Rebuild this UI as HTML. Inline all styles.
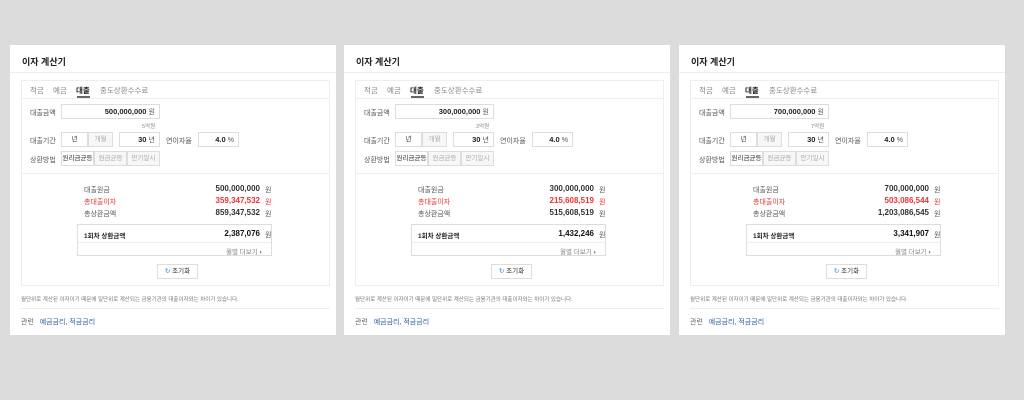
<!DOCTYPE html>
<html><head><meta charset="utf-8"><style>
*{margin:0;padding:0;box-sizing:border-box}
body{width:1024px;height:400px;background:#dcdcdc;font-family:"Liberation Sans","Noto Sans CJK KR",sans-serif;position:relative;overflow:hidden;font-size:7px;color:#555}
.p{position:absolute;top:45px;width:326px;height:290px;background:#fff}
.a{position:absolute;white-space:nowrap}
.t{left:12px;top:10px;font-size:9px;font-weight:bold;color:#222}
.hr{position:absolute;height:1px;background:#eee}
.in{position:absolute;left:11px;top:35px;width:309px;height:206px;border:1px solid #eee;background:#fff}
.tab{top:4px;font-size:7.5px;color:#888}
.box{position:absolute;border:1px solid #ddd;background:#fff;font-size:7.5px;color:#222;font-weight:bold;text-align:right;padding-right:4px;line-height:13px}
.lb{font-size:7px;color:#555}
.btn{position:absolute;border:1px solid #ddd;background:#fff;font-size:6.5px;color:#aaa;text-align:center;line-height:13px}
.v{font-size:8px;font-weight:bold;color:#333;text-align:right}
.w{font-size:7px;color:#555}
</style></head><body>
<div class="p" style="left:10px">
<div class="a t">이자 계산기</div><div class="hr" style="left:0;right:0;top:27px"></div>
<div class="in">
<div class="a tab" style="left:8px">적금</div><div class="a tab" style="left:31px">예금</div><div class="a tab" style="left:54px;color:#222;font-weight:bold">대출</div><div class="a tab" style="left:78px">중도상환수수료</div>
<div class="hr" style="left:55px;width:13px;top:15px;height:2px;background:#666"></div>
<div class="hr" style="left:0;right:0;top:17px"></div>
<div class="a lb" style="left:8px;top:27px">대출금액</div>
<div class="box" style="left:39px;top:23px;width:99px;height:15px">500,000,000 <span class="w" style="font-weight:normal">원</span></div>
<div class="a" style="left:120px;top:41px;font-size:5.5px;color:#888">5억원</div>
<div class="a lb" style="left:8px;top:55px">대출기간</div>
<div class="btn" style="left:39px;top:51px;width:27px;height:15px;color:#333">년</div>
<div class="btn" style="left:66px;top:51px;width:25px;height:15px;background:#f7f7f7">개월</div>
<div class="box" style="left:97px;top:51px;width:41px;height:15px">30 <span class="w" style="font-weight:normal">년</span></div>
<div class="a lb" style="left:144px;top:55px">연이자율</div>
<div class="box" style="left:176px;top:51px;width:41px;height:15px">4.0 <span class="w" style="font-weight:normal">%</span></div>
<div class="a lb" style="left:8px;top:74px">상환방법</div>
<div class="btn" style="left:39px;top:70px;width:33px;height:15px;color:#333">원리금균등</div>
<div class="btn" style="left:72px;top:70px;width:33px;height:15px;background:#f7f7f7">원금균등</div>
<div class="btn" style="left:105px;top:70px;width:33px;height:15px;background:#f7f7f7">만기일시</div>
<div class="hr" style="left:0;right:0;top:92px"></div>
<div class="a lb" style="left:62px;top:104px">대출원금</div><div class="a v" style="right:69px;top:103px">500,000,000</div><div class="a w" style="left:243px;top:104px">원</div>
<div class="a lb" style="left:62px;top:116px;color:#e33">총대출이자</div><div class="a v" style="right:69px;top:115px;color:#e33">359,347,532</div><div class="a w" style="left:243px;top:116px;color:#e33">원</div>
<div class="a lb" style="left:62px;top:128px">총상환금액</div><div class="a v" style="right:69px;top:127px">859,347,532</div><div class="a w" style="left:243px;top:128px">원</div>
<div style="position:absolute;left:55px;top:143px;width:195px;height:32px;border:1px solid #ddd"></div>
<div class="hr" style="left:56px;width:193px;top:161px"></div>
<div class="a" style="left:62px;top:149px;font-size:6.5px;font-weight:bold;color:#222">1회차 상환금액</div><div class="a v" style="right:69px;top:148px;color:#111">2,387,076</div><div class="a w" style="left:243px;top:149px">원</div>
<div class="a" style="left:204px;top:165px;font-size:6.5px;color:#888">월별 더보기 <b style="color:#555">›</b></div>
<div class="btn" style="left:135px;top:183px;width:41px;height:15px;color:#333"><span style="color:#2a7fd0">↻</span> 조기화</div>
</div>
<div class="a" style="left:11px;top:250px;font-size:5.5px;color:#777">월단위로 계산된 이자이기 때문에 일단위로 계산되는 금융기관의 대출이자와는 차이가 있습니다.</div>
<div class="hr" style="left:11px;right:6px;top:263px"></div>
<div class="a" style="left:11px;top:272px;font-size:7px;color:#666">관련 &nbsp; <span style="color:#2a5d9f">예금금리, 적금금리</span></div>
</div>
<script>
var p=document.querySelector('.p');
var d=[[344,'300,000,000','3억원','215,608,519','515,608,519','1,432,246'],[679,'700,000,000','7억원','503,086,544','1,203,086,545','3,341,907']];
d.forEach(function(x){var c=p.cloneNode(true);c.style.left=x[0]+'px';
var b=c.querySelectorAll('.box')[0];b.firstChild.nodeValue=x[1]+' ';
c.querySelectorAll('.in>.a')[5].textContent=x[2];
var v=c.querySelectorAll('.v');v[0].textContent=x[1];v[1].textContent=x[3];v[2].textContent=x[4];v[3].textContent=x[5];
document.body.appendChild(c);});
</script>
</body></html>
